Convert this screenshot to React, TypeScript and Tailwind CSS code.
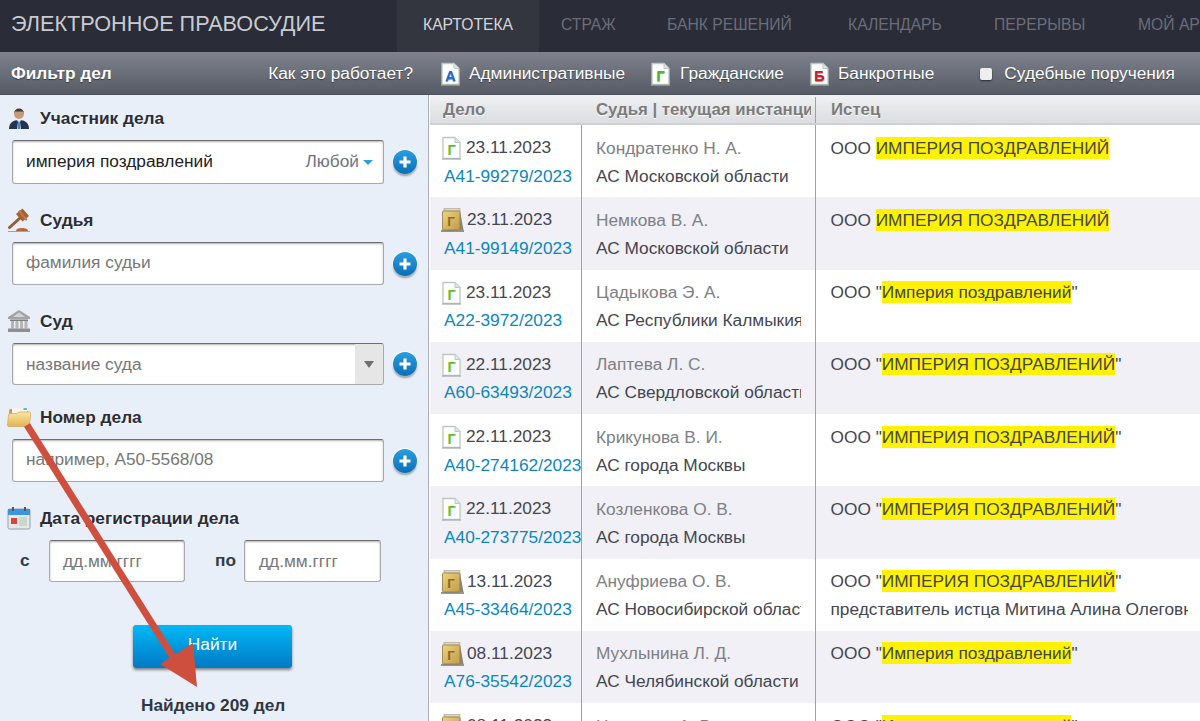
import React from 'react';

const FONT = "[font-family:'Liberation_Sans',Arial,sans-serif]";

const DocIcon = ({ letter, color }: { letter: string; color: string }) => (
  <svg width="22" height="24" viewBox="0 0 22 24" className="shrink-0">
    <path d="M2 1.500h12l5 5v16H2z" fill="#fff" stroke="#bcc7c1" strokeWidth="1.300" />
    <path d="M14 1.500v5h5" fill="#dfe5e2" stroke="#bcc7c1" strokeWidth="1" />
    <path d="M1 23h19" stroke="#9da6a1" strokeWidth="1" />
    <text x="10.500" y="18.500" textAnchor="middle" fontSize="14.500" fontWeight="700" fill={color} fontFamily="Liberation Sans">{letter}</text>
  </svg>
);

const BookIcon = () => (
  <svg width="24" height="24" viewBox="0 0 24 24" className="shrink-0">
    <defs>
      <linearGradient id="gold" x1="0" y1="0" x2="1" y2="1">
        <stop offset="0" stopColor="#f0d480" />
        <stop offset="1" stopColor="#c09a45" />
      </linearGradient>
    </defs>
    <rect x="3" y="0.500" width="16" height="3" fill="#d8d6c8" stroke="#99957f" strokeWidth="0.500" />
    <rect x="1.500" y="3" width="17.500" height="19" rx="1" fill="url(#gold)" stroke="#8f7a3c" strokeWidth="0.800" />
    <path d="M19 3l3.500 19H19z" fill="#8d8468" />
    <path d="M0 23h23" stroke="#6f6a56" strokeWidth="1.400" />
    <text x="10" y="18" textAnchor="middle" fontSize="13.500" fontWeight="700" fill="#8a6a2a" fontFamily="Liberation Sans">Г</text>
  </svg>
);

const PlusBtn = () => (
  <div className="w-6 h-6 rounded-full bg-gradient-to-b from-[#2a9fe0] to-[#0a6fb5] shadow-[0_2px_2px_rgba(0,0,0,0.35),0_0_0_1px_#fff] flex items-center justify-center shrink-0">
    <svg width="14" height="14" viewBox="0 0 14 14">
      <path d="M7 1.500v11M1.500 7h11" stroke="#fff" strokeWidth="3.200" />
    </svg>
  </div>
);

const UserIcon = () => (
  <svg width="24" height="24" viewBox="0 0 24 24">
    <circle cx="12" cy="8" r="5" fill="#c79a78" />
    <path d="M7 7.500a5 5 0 0 1 10 0l-1-2H8z" fill="#4a3a30" />
    <path d="M2 23c0-6 4-9 10-9s10 3 10 9z" fill="#24344f" />
    <path d="M10 14h4l-1 2 1 7h-4l1-7z" fill="#dfe8f0" />
    <path d="M11.300 15.500h1.400l.6 7.500h-2.600z" fill="#3f87c9" />
  </svg>
);

const GavelIcon = () => (
  <svg width="24" height="24" viewBox="0 0 24 24">
    <path d="M2.500 19.500L12.500 10.500" stroke="#9a5a30" strokeWidth="3" strokeLinecap="round" />
    <path d="M9 6l6.500-5.500 6.500 7.500-6.500 5.500z" fill="#a8602f" />
    <path d="M11 3.500l1.500-1.500 8 9.500-1.500 1.500z" fill="#c07a45" />
    <path d="M9 23c0-2 2.500-3 6-3s6 1 6 3z" fill="#b5683a" />
    <path d="M1 23.500h22" stroke="#a9a29c" strokeWidth="1" />
  </svg>
);

const BankIcon = () => (
  <svg width="24" height="24" viewBox="0 0 24 24">
    <path d="M12 1L23 8v2H1V8z" fill="#a3a3a3" />
    <path d="M12 3.500L18 8H6z" fill="#d4d4d4" />
    <path d="M3 10.500h18v1.500H3z" fill="#7d7d7d" />
    <path d="M4 12h3v7.500H4zM8.500 12h3v7.500h-3zM13 12h3v7.500h-3zM17.500 12h3v7.500h-3z" fill="#b5b5b5" />
    <path d="M1 19.500h22V23H1z" fill="#8f8f8f" />
  </svg>
);

const FolderIcon = () => (
  <svg width="24" height="20" viewBox="0 0 24 20">
    <defs>
      <linearGradient id="folderFront" x1="0" y1="0" x2="0" y2="1">
        <stop offset="0" stopColor="#fbe6a6" />
        <stop offset="1" stopColor="#e3b552" />
      </linearGradient>
    </defs>
    <path d="M2 3.500Q2 2 3.500 2H8l2 2h10q1.500 0 1.500 1.500V10H2z" fill="#c99f4a" />
    <path d="M5 1h15v8H5z" fill="#f7f4e8" />
    <path d="M16.500 1H20v2h-3.500z" fill="#5fb8c9" />
    <path d="M3 6.500h7l2-1.500h10.500q1.500 0 1.300 1.500L22.500 18q-.2 1.500-1.700 1.500H2q-1.700 0-1.500-1.700L1.500 8q.2-1.500 1.500-1.500z" fill="url(#folderFront)" stroke="#c99f4a" strokeWidth="0.600" />
  </svg>
);

const CalIcon = () => (
  <svg width="24" height="24" viewBox="0 0 24 24">
    <rect x="1" y="3" width="22" height="20" rx="1.500" fill="#e7e9e6" stroke="#77808a" strokeWidth="0.700" />
    <rect x="1" y="3" width="22" height="6" fill="#3c93df" />
    <rect x="5" y="1" width="2" height="4" fill="#555" />
    <rect x="17" y="1" width="2" height="4" fill="#555" />
    <rect x="4" y="12" width="6" height="6" fill="#e2403a" />
    <rect x="12" y="11" width="8" height="9" fill="#c9d9c8" />
  </svg>
);

const Label = ({ icon, text, className }: { icon: React.ReactNode; text: string; className: string }) => (
  <div className={`flex items-center h-6 ${className}`}>
    <div className="w-[40px] pl-[7px] shrink-0 flex">{icon}</div>
    <span className="pt-[2px] font-bold text-[#2b2d35] [text-shadow:0_1px_0_#fff]">{text}</span>
  </div>
);

const inputBox = 'border border-[#a9a9a9] border-t-[#6e6e6e] rounded-[3px] bg-white shadow-[inset_0_1px_2px_rgba(0,0,0,0.3)]';

const FieldRow = ({ children, h }: { children: React.ReactNode; h: string }) => (
  <div className={`flex items-center mt-[10px] ml-3 ${h}`}>
    {children}
    <div className="ml-[9px]"><PlusBtn /></div>
  </div>
);

type Row = { doc: 'g' | 'book'; date: string; num: string; judge: string; court: string; pre: string; hl: string; post?: string; extra?: string };

const rows: Row[] = [
  { doc: 'g', date: '23.11.2023', num: 'А41-99279/2023', judge: 'Кондратенко Н. А.', court: 'АС Московской области', pre: 'ООО ', hl: 'ИМПЕРИЯ ПОЗДРАВЛЕНИЙ' },
  { doc: 'book', date: '23.11.2023', num: 'А41-99149/2023', judge: 'Немкова В. А.', court: 'АС Московской области', pre: 'ООО ', hl: 'ИМПЕРИЯ ПОЗДРАВЛЕНИЙ' },
  { doc: 'g', date: '23.11.2023', num: 'А22-3972/2023', judge: 'Цадыкова Э. А.', court: 'АС Республики Калмыкия', pre: 'ООО "', hl: 'Империя поздравлений', post: '"' },
  { doc: 'g', date: '22.11.2023', num: 'А60-63493/2023', judge: 'Лаптева Л. С.', court: 'АС Свердловской области', pre: 'ООО "', hl: 'ИМПЕРИЯ ПОЗДРАВЛЕНИЙ', post: '"' },
  { doc: 'g', date: '22.11.2023', num: 'А40-274162/2023', judge: 'Крикунова В. И.', court: 'АС города Москвы', pre: 'ООО "', hl: 'ИМПЕРИЯ ПОЗДРАВЛЕНИЙ', post: '"' },
  { doc: 'g', date: '22.11.2023', num: 'А40-273775/2023', judge: 'Козленкова О. В.', court: 'АС города Москвы', pre: 'ООО "', hl: 'ИМПЕРИЯ ПОЗДРАВЛЕНИЙ', post: '"' },
  { doc: 'book', date: '13.11.2023', num: 'А45-33464/2023', judge: 'Ануфриева О. В.', court: 'АС Новосибирской области', pre: 'ООО "', hl: 'ИМПЕРИЯ ПОЗДРАВЛЕНИЙ', post: '"', extra: 'представитель истца Митина Алина Олеговна' },
  { doc: 'book', date: '08.11.2023', num: 'А76-35542/2023', judge: 'Мухлынина Л. Д.', court: 'АС Челябинской области', pre: 'ООО "', hl: 'Империя поздравлений', post: '"' },
  { doc: 'book', date: '08.11.2023', num: 'А76-35540/2023', judge: 'Николаев А. В.', court: 'АС Челябинской области', pre: 'ООО "', hl: 'Империя поздравлений', post: '"' },
];

const tabs = [
  { label: 'КАРТОТЕКА', cls: 'w-[142px] pl-[26px] bg-[#33353f] text-[#d5d6da]' },
  { label: 'СТРАЖ', cls: 'w-[106px] pl-[22px] text-[#6a6e78]' },
  { label: 'БАНК РЕШЕНИЙ', cls: 'w-[181px] pl-[22px] text-[#6a6e78]' },
  { label: 'КАЛЕНДАРЬ', cls: 'w-[146px] pl-[22px] text-[#6a6e78]' },
  { label: 'ПЕРЕРЫВЫ', cls: 'w-[144px] pl-[22px] text-[#6a6e78]' },
  { label: 'МОЙ АРБИТР', cls: 'w-[144px] pl-[22px] text-[#6a6e78]' },
];

export default function App() {
  return (
    <div className={`relative w-[1200px] h-[721px] overflow-hidden bg-white text-[17.3px] ${FONT}`}>
      {/* Header */}
      <header className="h-[52px] bg-[#2a2c38] flex overflow-hidden">
        <div className="w-[397px] shrink-0 pl-[11px] pt-[11px] text-[21.65px] leading-[26px] text-[#c9cbd0] whitespace-nowrap">ЭЛЕКТРОННОЕ ПРАВОСУДИЕ</div>
        <nav className="flex text-[15.7px] whitespace-nowrap">
          {tabs.map(t => (
            <div key={t.label} className={`h-[52px] shrink-0 flex items-center pb-[3px] ${t.cls}`}>{t.label}</div>
          ))}
        </nav>
      </header>

      {/* Toolbar */}
      <div className="h-[43px] flex bg-gradient-to-b from-[#7d828c] to-[#565b66] border-b border-[#4a4e58] text-white whitespace-nowrap [text-shadow:0_1px_1px_rgba(0,0,0,0.45)]">
        <div className="w-[428px] shrink-0 flex items-center justify-between pl-[11px] pr-[15px] pt-[2px]">
          <span className="font-bold">Фильтр дел</span>
          <span>Как это работает?</span>
        </div>
        <div className="flex items-center pl-[12px] pt-[2px]">
          <DocIcon letter="А" color="#1e6cc8" />
          <span className="ml-[7px]">Административные</span>
          <div className="ml-[25px]"><DocIcon letter="Г" color="#4fb81e" /></div>
          <span className="ml-[8px]">Гражданские</span>
          <div className="ml-[25px]"><DocIcon letter="Б" color="#c8202a" /></div>
          <span className="ml-[7px]">Банкротные</span>
          <div className="ml-[46px] w-3 h-3 rounded-[2px] bg-[#eeeeee] shadow-[0_1px_2px_rgba(0,0,0,0.6)]" />
          <span className="ml-[12px]">Судебные поручения</span>
        </div>
      </div>

      <div className="flex h-[626px]">
        {/* Filter sidebar */}
        <aside className="w-[429px] shrink-0 bg-[#e8eff9] border-r border-[#a9aeb8] pt-[11px]">
          <Label icon={<UserIcon />} text="Участник дела" className="" />
          <FieldRow h="h-[44px]">
            <div className={`w-[372px] h-full flex items-center justify-between pl-[13px] pr-[10px] ${inputBox}`}>
              <span className="text-[#222]">империя поздравлений</span>
              <span className="flex items-center text-[#6f7480]">Любой<span className="ml-1 border-x-[5px] border-x-transparent border-t-[5px] border-t-[#2a9fd8]" /></span>
            </div>
          </FieldRow>

          <Label icon={<GavelIcon />} text="Судья" className="mt-[24px]" />
          <FieldRow h="h-[43px]">
            <div className={`w-[372px] h-full flex items-center pl-[13px] pb-[2px] text-[#777] ${inputBox}`}>фамилия судьи</div>
          </FieldRow>

          <Label icon={<BankIcon />} text="Суд" className="mt-[24px]" />
          <FieldRow h="h-[42px]">
            <div className={`w-[372px] h-full flex items-center justify-between pl-[13px] text-[#777] overflow-hidden ${inputBox}`}>
              <span className="pt-[1px]">название суда</span>
              <div className="w-[28px] h-full bg-[#e6e6e6] flex items-center justify-center">
                <span className="border-x-[5px] border-x-transparent border-t-[7px] border-t-[#6f6f6f]" />
              </div>
            </div>
          </FieldRow>

          <Label icon={<FolderIcon />} text="Номер дела" className="mt-[20px]" />
          <FieldRow h="h-[43px]">
            <div className={`w-[372px] h-full flex items-center pl-[13px] pb-[2px] text-[#777] ${inputBox}`}>например, А50-5568/08</div>
          </FieldRow>

          <Label icon={<CalIcon />} text="Дата регистрации дела" className="mt-[24px]" />
          <div className="flex items-center mt-[10px] h-[42px] font-bold text-[#333a45]">
            <span className="w-[49px] pl-[20px]">с</span>
            <div className={`w-[136px] h-full flex items-center pl-[13px] pt-[2px] font-normal text-[#777] ${inputBox}`}>дд.мм.гггг</div>
            <span className="w-[59px] pl-[30px]">по</span>
            <div className={`w-[137px] h-full flex items-center pl-[14px] pt-[2px] font-normal text-[#777] ${inputBox}`}>дд.мм.гггг</div>
          </div>

          <div className="mt-[43px] ml-[133px] w-[159px] h-[43px] pb-[3px] rounded-[3px] bg-gradient-to-b from-[#00b9f5] to-[#0079c4] shadow-[0_2px_3px_rgba(0,0,0,0.45)] flex items-center justify-center text-white">Найти</div>
          <div className="mt-[25px] ml-[141px] font-bold text-[#333640]">Найдено 209 дел</div>
        </aside>

        {/* Results */}
        <main className="flex-1 min-w-0 pl-px overflow-hidden">
          <div className="h-[30px] pt-[2px] flex items-center bg-gradient-to-b from-[#f0f1f3] to-[#dcdde0] border-b-2 border-[#cfd0d3] text-[16.8px] font-bold text-[#7b7b7b] [text-shadow:0_1px_0_#fff] whitespace-nowrap">
            <div className="w-[152px] pl-[13px] shrink-0">Дело</div>
            <div className="w-[234px] pl-[14px] pr-[4px] shrink-0 border-r border-[#a0a0a0] h-full flex items-center">
              <div className="overflow-hidden">Судья | текущая инстанция</div>
            </div>
            <div className="pl-[15px]">Истец</div>
          </div>
          {rows.map((r, i) => (
            <div key={i} className={`h-[72.25px] flex whitespace-nowrap ${i % 2 ? 'bg-[#f0f0f6]' : 'bg-white'}`}>
              <div className="w-[152px] shrink-0 border-r border-[#a0a0a0] pl-[11px] pt-[9.5px]">
                <div className="flex items-center h-[27px]">
                  {r.doc === 'g' ? <DocIcon letter="Г" color="#5cc21f" /> : <BookIcon />}
                  <span className={`${r.doc === 'g' ? 'ml-[3px]' : 'ml-[2px]'} text-[#444650]`}>{r.date}</span>
                </div>
                <div className="pl-[3px] mt-[1px] leading-[26px] text-[#0b87bd]">{r.num}</div>
              </div>
              <div className="w-[234px] shrink-0 border-r border-[#a0a0a0] pl-[14px] pr-[14px] pt-[9.5px] overflow-hidden">
                <div className="h-[27px] leading-[27px] text-[#7e8085]">{r.judge}</div>
                <div className="mt-[1px] leading-[26px] overflow-hidden text-[#444650]">{r.court}</div>
              </div>
              <div className="flex-1 min-w-0 pl-[14.5px] pr-[12px] pt-[9.5px] overflow-hidden text-[#444650]">
                <div className="h-[27px] leading-[27px]">{r.pre}<span className="bg-[#fff200] py-[1px]">{r.hl}</span>{r.post}</div>
                {r.extra && <div className="mt-[1px] leading-[26px] overflow-hidden">{r.extra}</div>}
              </div>
            </div>
          ))}
        </main>
      </div>

      {/* Red annotation arrow */}
      <svg className="absolute left-0 top-0 pointer-events-none" width="1200" height="721" viewBox="0 0 1200 721">
        <path d="M27 425L175 660" stroke="#cf4f3f" strokeWidth="7" />
        <path d="M197 687L160 664L193 643z" fill="#cf4f3f" />
      </svg>
    </div>
  );
}
